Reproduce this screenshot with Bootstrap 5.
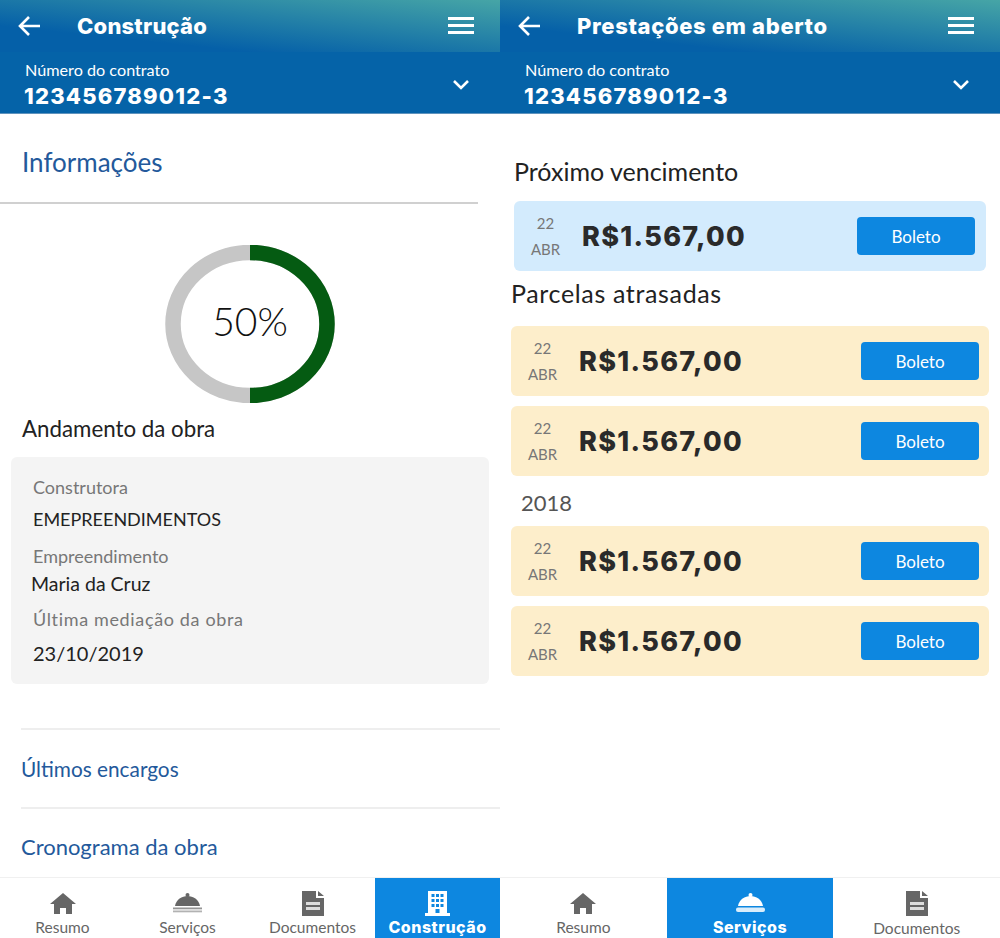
<!DOCTYPE html>
<html lang="pt-BR">
<head>
<meta charset="utf-8">
<title>Construção e Prestações</title>
<link rel="stylesheet" href="https://cdn.jsdelivr.net/npm/bootstrap@5.3.0/dist/css/bootstrap.min.css">
<style>
html,body{height:938px;overflow:hidden}
body{font-family:Lato,"Liberation Sans",sans-serif;background:#fff;color:#222}
.screen{width:500px;height:938px;flex:none}
.topbar{height:52px;background:linear-gradient(to top right,#0560a8 25%,#46a5a6 100%);color:#fff;padding:0 26px 0 17px}
.topbar h1{font:800 22px/1 Inter,sans-serif;margin:0 0 0 34px;color:#fff;letter-spacing:.2px}
.topbar h1.title-wide{letter-spacing:.65px}
.contractbar{height:62px;background:#0563a8;color:#fff;padding:9px 30px 0 25px;border-bottom:1px solid #5f93bd}
.contract-lbl{font-size:16.200px;line-height:18px}
.contract-num{font:800 22px/35px Inter,sans-serif;letter-spacing:1.200px;margin-left:-1px}
.chev{margin-top:18px}
.info-title{font-size:26px;line-height:32px;color:#23599b;margin:32px 0 0 22px}
.rule{height:2px;background:#d0d0d0;width:478px;margin-top:24px}
.donut-wrap{margin:41px 0 0 165px;height:158px;width:170px}
.donut-wrap svg{display:block}
.donutval{font-size:39px;font-weight:300;color:#111;position:relative;padding-bottom:6px}
.andamento{font-size:22.300px;line-height:26px;margin:13px 0 0 22px;color:#222}
.graybox{margin:15px 11px 0;height:227px;background:#f4f4f4;border-radius:6px;padding:18px 0 0 22px;font-size:18px}
.gl{color:#777;line-height:24px}
.gv{color:#222;line-height:24px}
.gv-1{margin-top:8px}
.gl-2{margin-top:13px}
.gv-2{margin:4px 0 0 -2px;font-size:19.500px}
.gl-3{margin-top:11px;letter-spacing:.65px}
.gv-3{margin-top:10px;font-size:20px}
.linkrow{margin-left:21px;border-top:2px solid #eee;color:#23599b;line-height:26px}
.link-a{font-size:20.800px;margin-top:44px;padding:26px 0 25px}
.link-b{font-size:22px;padding:25px 0 0}
.tabbar{height:61px;border-top:1px solid #f0f0f0;margin-top:auto}
.tab{flex:1 1 0;color:#666;font-size:15.500px;line-height:18px;padding-top:12px;min-width:0}
.tab-ico{height:26px;display:flex;align-items:center;justify-content:center;margin-bottom:2px}
.tab-lbl{display:block}
.tab-lbl.drop-1{margin-top:1px}
.tab-lbl.drop-3{margin-top:3px}
.tab.on{background:#0d87e0;color:#fff;font:800 16px/18px Inter,sans-serif;letter-spacing:.5px}
.sect{font-size:25px;line-height:30px;color:#222}
.sect-next{margin:42px 0 15px 14px}
.sect-late{margin:7px 0 18px 11px;letter-spacing:.65px}
.bill{height:70px;border-radius:6px;padding-left:15px}
.bill.next{background:#d3ebfd;margin:0 14px}
.bill.late{background:#fdeecb;margin:0 11px 10px}
.bdate{width:33px;text-align:center;color:#777;font-size:15px;line-height:26px;flex:none}
.bamt{font:800 27px/1 Inter,sans-serif;letter-spacing:1.300px;color:#2a2a2a;margin-left:20px}
.boleto{width:118px;height:38px;background:#0d87e0;border:0;border-radius:4px;color:#fff;font-size:17px;margin:0 11px 0 auto;padding:2px 0 0;display:flex;align-items:center;justify-content:center}
.late .boleto{margin-right:10px}
.yr{font-size:22px;line-height:28px;color:#555;margin:3px 0 9px 21px}
</style>
</head>
<body class="d-flex m-0">

<section class="screen d-flex flex-column">
  <header class="topbar d-flex align-items-center">
    <svg width="26" height="24" viewBox="0 0 26 24" fill="none" stroke="#fff" stroke-width="2.600"><path d="M23 12H4M12 3l-9 9 9 9"/></svg>
    <h1>Construção</h1>
    <svg class="ms-auto" width="26" height="18" viewBox="0 0 26 18" fill="#fff"><rect y="0" width="26" height="3"/><rect y="7" width="26" height="3"/><rect y="14" width="26" height="3"/></svg>
  </header>
  <div class="contractbar d-flex justify-content-between">
    <div><div class="contract-lbl">Número do contrato</div><div class="contract-num">123456789012-3</div></div>
    <svg class="chev" width="18" height="12" viewBox="0 0 18 12" fill="none" stroke="#fff" stroke-width="2.600"><path d="M2 2l7 7 7-7"/></svg>
  </div>
  <div class="info-title">Informações</div>
  <div class="rule"></div>
  <div class="donut-wrap position-relative d-flex align-items-center justify-content-center">
    <svg class="position-absolute top-0 start-0" width="170" height="158" viewBox="0 0 170 158">
      <ellipse cx="85" cy="79" rx="77" ry="71.500" fill="none" stroke="#c6c6c6" stroke-width="15.500"/>
      <path d="M85 7.500A77 71.500 0 0 1 85 150.500" fill="none" stroke="#055b12" stroke-width="15.500"/>
    </svg>
    <span class="donutval">50%</span>
  </div>
  <div class="andamento">Andamento da obra</div>
  <div class="graybox">
    <div class="gl">Construtora</div>
    <div class="gv gv-1">EMEPREENDIMENTOS</div>
    <div class="gl gl-2">Empreendimento</div>
    <div class="gv gv-2">Maria da Cruz</div>
    <div class="gl gl-3">Última mediação da obra</div>
    <div class="gv gv-3">23/10/2019</div>
  </div>
  <div class="linkrow link-a">Últimos encargos</div>
  <div class="linkrow link-b">Cronograma da obra</div>
  <nav class="tabbar d-flex text-center">
    <div class="tab"><div class="tab-ico"><svg width="26" height="21" viewBox="0 0 26 21" fill="#666"><path d="M13 0 0 11h4v10h6v-6h6v6h6V11h4z"/></svg></div><span class="tab-lbl drop-1">Resumo</span></div>
    <div class="tab"><div class="tab-ico"><svg width="29" height="20" viewBox="0 0 29 20" fill="#666"><circle cx="14.500" cy="2" r="2"/><path d="M2 13C3 6.500 9 3 14.500 3S26 6.500 27 13z"/><rect y="14.500" width="29" height="1.800" opacity=".7"/><rect y="17.500" width="29" height="1.800" opacity=".5"/></svg></div><span class="tab-lbl">Serviços</span></div>
    <div class="tab"><div class="tab-ico"><svg width="22" height="25" viewBox="0 0 22 25" fill="#666"><path d="M0 0h14v7h8v18H0zM16 0l6 5h-6z"/><rect x="4" y="11" width="14" height="3" fill="#ddd"/><rect x="4" y="16" width="14" height="3" fill="#ddd"/></svg></div><span class="tab-lbl">Documentos</span></div>
    <div class="tab on"><div class="tab-ico"><svg width="25" height="25" viewBox="0 0 25 25" fill="#fff"><path d="M3 0h19v22H3z"/><rect y="22" width="25" height="3"/><g fill="#0d87e0"><rect x="6.500" y="3" width="3" height="3"/><rect x="11" y="3" width="3" height="3"/><rect x="15.500" y="3" width="3" height="3"/><rect x="6.500" y="8" width="3" height="3"/><rect x="11" y="8" width="3" height="3"/><rect x="15.500" y="8" width="3" height="3"/><rect x="6.500" y="13" width="3" height="3"/><rect x="11" y="13" width="3" height="3"/><rect x="15.500" y="13" width="3" height="3"/><rect x="10.500" y="18" width="4" height="4"/></g></svg></div><span class="tab-lbl">Construção</span></div>
  </nav>
</section>

<section class="screen d-flex flex-column">
  <header class="topbar d-flex align-items-center">
    <svg width="26" height="24" viewBox="0 0 26 24" fill="none" stroke="#fff" stroke-width="2.600"><path d="M23 12H4M12 3l-9 9 9 9"/></svg>
    <h1 class="title-wide">Prestações em aberto</h1>
    <svg class="ms-auto" width="26" height="18" viewBox="0 0 26 18" fill="#fff"><rect y="0" width="26" height="3"/><rect y="7" width="26" height="3"/><rect y="14" width="26" height="3"/></svg>
  </header>
  <div class="contractbar d-flex justify-content-between">
    <div><div class="contract-lbl">Número do contrato</div><div class="contract-num">123456789012-3</div></div>
    <svg class="chev" width="18" height="12" viewBox="0 0 18 12" fill="none" stroke="#fff" stroke-width="2.600"><path d="M2 2l7 7 7-7"/></svg>
  </div>
  <div class="sect sect-next">Próximo vencimento</div>
  <div class="bill next d-flex align-items-center">
    <div class="bdate">22<br>ABR</div><div class="bamt">R$1.567,00</div><button type="button" class="btn boleto">Boleto</button>
  </div>
  <div class="sect sect-late">Parcelas atrasadas</div>
  <div class="bill late d-flex align-items-center">
    <div class="bdate">22<br>ABR</div><div class="bamt">R$1.567,00</div><button type="button" class="btn boleto">Boleto</button>
  </div>
  <div class="bill late d-flex align-items-center">
    <div class="bdate">22<br>ABR</div><div class="bamt">R$1.567,00</div><button type="button" class="btn boleto">Boleto</button>
  </div>
  <div class="yr">2018</div>
  <div class="bill late d-flex align-items-center">
    <div class="bdate">22<br>ABR</div><div class="bamt">R$1.567,00</div><button type="button" class="btn boleto">Boleto</button>
  </div>
  <div class="bill late d-flex align-items-center">
    <div class="bdate">22<br>ABR</div><div class="bamt">R$1.567,00</div><button type="button" class="btn boleto">Boleto</button>
  </div>
  <nav class="tabbar d-flex text-center">
    <div class="tab"><div class="tab-ico"><svg width="26" height="21" viewBox="0 0 26 21" fill="#666"><path d="M13 0 0 11h4v10h6v-6h6v6h6V11h4z"/></svg></div><span class="tab-lbl drop-1">Resumo</span></div>
    <div class="tab on"><div class="tab-ico"><svg width="29" height="20" viewBox="0 0 29 20" fill="#fff"><circle cx="14.500" cy="2" r="2"/><path d="M2 13C3 6.500 9 3 14.500 3S26 6.500 27 13z"/><rect y="14.500" width="29" height="4.500" rx="2" opacity=".85"/></svg></div><span class="tab-lbl">Serviços</span></div>
    <div class="tab"><div class="tab-ico"><svg width="22" height="25" viewBox="0 0 22 25" fill="#666"><path d="M0 0h14v7h8v18H0zM16 0l6 5h-6z"/><rect x="4" y="11" width="14" height="3" fill="#ddd"/><rect x="4" y="16" width="14" height="3" fill="#ddd"/></svg></div><span class="tab-lbl drop-3">Documentos</span></div>
  </nav>
</section>
</body>
</html>
